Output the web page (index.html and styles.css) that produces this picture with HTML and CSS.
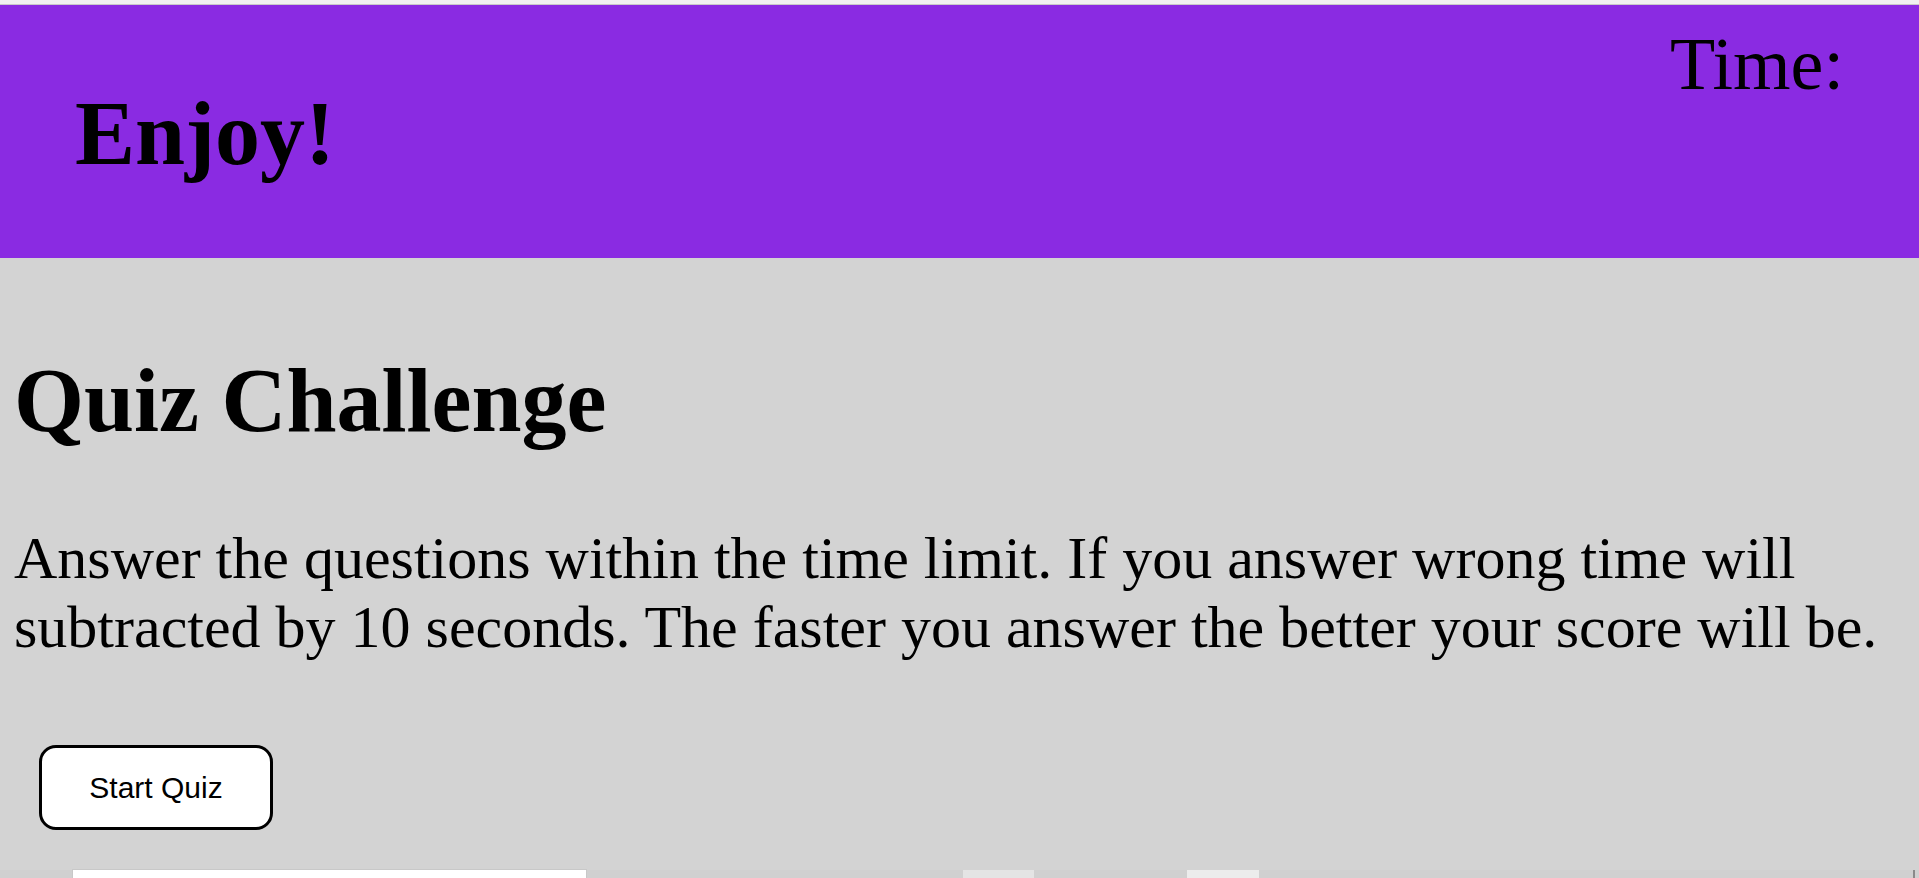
FILE: index.html
```html
<!DOCTYPE html>
<html lang="en">
<head>
<meta charset="utf-8">
<title>Quiz Challenge</title>
<link rel="stylesheet" href="styles.css">
</head>
<body>
<div class="chrome"></div>
<header class="header">
  <h1 class="brand">Enjoy!</h1>
  <div class="timer">Time: <span class="timer-value"></span></div>
</header>
<main class="main">
  <h1 class="title">Quiz Challenge</h1>
  <p class="intro">Answer the questions within the time limit. If you answer wrong time will subtracted by 10 seconds. The faster you answer the better your score will be.</p>
  <button class="start">Start Quiz</button>
</main>
<div class="strip">
  <div class="strip-box strip-white"></div>
  <div class="strip-box strip-light-a"></div>
  <div class="strip-box strip-light-b"></div>
  <div class="strip-tick"></div>
</div>
</body>
</html>
```

FILE: styles.css
```css
html, body {
  margin: 0;
  padding: 0;
}
body {
  background: #d3d3d3;
  font-family: "Liberation Serif", "Times New Roman", serif;
  color: #000;
  overflow: hidden;
  height: 878px;
}
.chrome {
  height: 4px;
  background: #f1f1f1;
  border-bottom: 1px solid #c9c9c9;
}
.header {
  background: #8a2be2;
  display: flex;
  justify-content: space-between;
  align-items: flex-start;
  padding: 17px 75px 13px 75px;
}
.brand {
  margin: 60px 0;
  font-size: 90px;
  font-weight: bold;
  line-height: normal;
}
.timer {
  font-size: 74px;
  line-height: normal;
}
.main {
  display: flex;
  flex-direction: column;
  align-items: flex-start;
  padding: 31px 14px 0 14px;
}
.title {
  margin: 60px 0 0 0;
  font-size: 90px;
  font-weight: bold;
  line-height: normal;
}
.intro {
  margin: 72px 0 0 0;
  font-size: 60px;
  line-height: normal;
}
.start {
  margin: 83px 0 0 25px;
  width: 234px;
  height: 85px;
  background: #fff;
  border: 3px solid #000;
  border-radius: 17px;
  font-family: "Liberation Sans", Arial, sans-serif;
  font-size: 30px;
  color: #000;
  padding: 0;
}
.strip {
  margin-top: 40px;
  height: 20px;
  background: #d0d0d0;
  display: flex;
  align-items: stretch;
}
.strip-box {
  height: 20px;
}
.strip-white {
  margin-left: 73px;
  width: 513px;
  background: #fff;
  box-shadow: 0 0 0 1px #c8c8c8;
}
.strip-light-a {
  margin-left: 377px;
  width: 71px;
  background: #e4e4e4;
}
.strip-light-b {
  margin-left: 153px;
  width: 72px;
  background: #ececec;
}
.strip-tick {
  margin-left: auto;
  margin-right: 4px;
  width: 2px;
  background: #8a8a8a;
}
```
